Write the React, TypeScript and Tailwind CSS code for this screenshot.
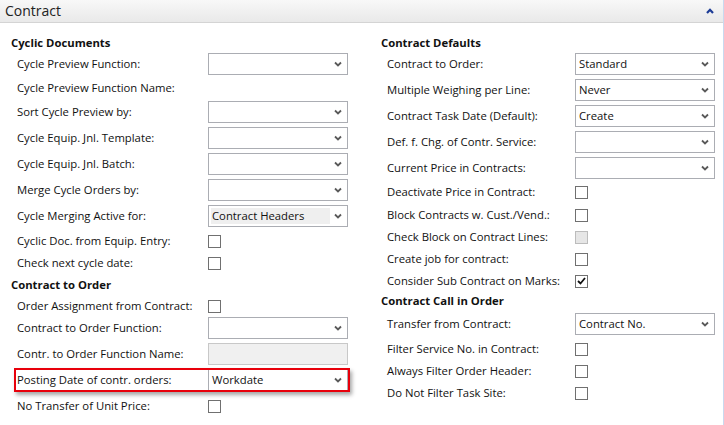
import React from "react";

type Row =
  | { kind: "heading"; text: string; h: number }
  | {
      kind: "field";
      label: string;
      h: number;
      ctl: "select" | "none" | "checkbox" | "readonly";
      value?: string;
      checked?: boolean;
      disabled?: boolean;
      inner?: boolean;
      red?: boolean;
    };

const left: Row[] = [
  { kind: "heading", text: "Cyclic Documents", h: 16 },
  { kind: "field", label: "Cycle Preview Function:", ctl: "select", h: 26 },
  { kind: "field", label: "Cycle Preview Function Name:", ctl: "none", h: 22 },
  { kind: "field", label: "Sort Cycle Preview by:", ctl: "select", h: 26 },
  { kind: "field", label: "Cycle Equip. Jnl. Template:", ctl: "select", h: 26 },
  { kind: "field", label: "Cycle Equip. Jnl. Batch:", ctl: "select", h: 26 },
  { kind: "field", label: "Merge Cycle Orders by:", ctl: "select", h: 26 },
  { kind: "field", label: "Cycle Merging Active for:", ctl: "select", value: "Contract Headers", inner: true, h: 26 },
  { kind: "field", label: "Cyclic Doc. from Equip. Entry:", ctl: "checkbox", h: 24 },
  { kind: "field", label: "Check next cycle date:", ctl: "checkbox", h: 20 },
  { kind: "heading", text: "Contract to Order", h: 24 },
  { kind: "field", label: "Order Assignment from Contract:", ctl: "checkbox", h: 18 },
  { kind: "field", label: "Contract to Order Function:", ctl: "select", h: 26 },
  { kind: "field", label: "Contr. to Order Function Name:", ctl: "readonly", h: 26 },
  { kind: "field", label: "Posting Date of contr. orders:", ctl: "select", value: "Workdate", red: true, h: 26 },
  { kind: "field", label: "No Transfer of Unit Price:", ctl: "checkbox", h: 26 },
];

const right: Row[] = [
  { kind: "heading", text: "Contract Defaults", h: 16 },
  { kind: "field", label: "Contract to Order:", ctl: "select", value: "Standard", h: 26 },
  { kind: "field", label: "Multiple Weighing per Line:", ctl: "select", value: "Never", h: 26 },
  { kind: "field", label: "Contract Task Date (Default):", ctl: "select", value: "Create", h: 26 },
  { kind: "field", label: "Def. f. Chg. of Contr. Service:", ctl: "select", h: 26 },
  { kind: "field", label: "Current Price in Contracts:", ctl: "select", h: 26 },
  { kind: "field", label: "Deactivate Price in Contract:", ctl: "checkbox", h: 23 },
  { kind: "field", label: "Block Contracts w. Cust./Vend.:", ctl: "checkbox", h: 22 },
  { kind: "field", label: "Check Block on Contract Lines:", ctl: "checkbox", disabled: true, h: 22 },
  { kind: "field", label: "Create job for contract:", ctl: "checkbox", h: 22 },
  { kind: "field", label: "Consider Sub Contract on Marks:", ctl: "checkbox", checked: true, h: 22 },
  { kind: "heading", text: "Contract Call in Order", h: 19 },
  { kind: "field", label: "Transfer from Contract:", ctl: "select", value: "Contract No.", h: 26 },
  { kind: "field", label: "Filter Service No. in Contract:", ctl: "checkbox", h: 24 },
  { kind: "field", label: "Always Filter Order Header:", ctl: "checkbox", h: 20 },
  { kind: "field", label: "Do Not Filter Task Site:", ctl: "checkbox", h: 24 },
];

function Chevron() {
  return (
    <svg width="8" height="6" viewBox="0 0 8 6" className="shrink-0 mr-[5px]">
      <polyline points="1,1.5 4,4.5 7,1.5" fill="none" stroke="#5a5a5a" strokeWidth="1.8" />
    </svg>
  );
}

function Control({ row }: { row: Extract<Row, { kind: "field" }> }) {
  if (row.ctl === "select") {
    return (
      <div className="w-[140px] h-[22px] border border-[#abadb3] bg-white flex items-center shrink-0">
        {row.inner ? (
          <div className="ml-[2px] w-[119px] h-[16px] bg-[#efefef] flex items-center pl-[1px] flex-none">
            {row.value}
          </div>
        ) : (
          <div className="pl-[3px] flex-1 leading-none">{row.value}</div>
        )}
        {row.inner && <div className="flex-1" />}
        <Chevron />
      </div>
    );
  }
  if (row.ctl === "readonly") {
    return <div className="w-[140px] h-[22px] border border-[#c8c8c8] bg-[#f0f0f0] shrink-0" />;
  }
  if (row.ctl === "checkbox") {
    return (
      <div
        className={
          row.disabled
            ? "w-[13px] h-[13px] border border-[#bcbcbc] bg-[#e6e6e6] shrink-0"
            : "w-[13px] h-[13px] border border-[#707070] bg-white shrink-0 flex items-center justify-center"
        }
      >
        {row.checked && (
          <svg width="9" height="8" viewBox="0 0 9 8">
            <polyline points="1,4 3.5,6.5 8,1" fill="none" stroke="#111" strokeWidth="1.8" />
          </svg>
        )}
      </div>
    );
  }
  return null;
}

function Column({ rows, labelW, width }: { rows: Row[]; labelW: string; width: string }) {
  return (
    <div className={`flex flex-col ${width}`}>
      {rows.map((r, i) =>
        r.kind === "heading" ? (
          <div key={i} className="flex items-center pl-[11px] font-bold" style={{ height: r.h }}>
            {r.text}
          </div>
        ) : (
          <div key={i} className="relative flex items-center pl-[17px]" style={{ height: r.h }}>
            <div className={`${labelW} shrink-0 whitespace-nowrap`}>{r.label}</div>
            <Control row={r} />
            {r.red && (
              <div className="absolute left-[14px] top-[1px] w-[336px] h-[24px] border-2 border-[#e8000b] shadow-[2px_3px_4px_rgba(0,0,0,0.35)] pointer-events-none" />
            )}
          </div>
        )
      )}
    </div>
  );
}

export default function App() {
  return (
    <div
      className="w-[724px] h-[425px] bg-white text-[11.3px] text-[#111] border-r border-[#c9d9ef] overflow-hidden"
      style={{ fontFamily: '"Open Sans", "Noto Sans", sans-serif' }}
    >
      <div className="h-[23px] border-b border-[#d4d4d4] bg-gradient-to-b from-[#f8f8f8] to-[#e9e9e9] flex items-center justify-between pl-[5px] pr-[9px]">
        <span className="text-[14px] text-[#222] leading-none">Contract</span>
        <svg width="8" height="6" viewBox="0 0 8 6">
          <polyline points="1,5 4,1.8 7,5" fill="none" stroke="#1d3c96" strokeWidth="2.2" />
        </svg>
      </div>
      <div className="flex pt-[12px]">
        <Column rows={left} labelW="w-[191px]" width="w-[370px]" />
        <Column rows={right} labelW="w-[188px]" width="w-[353px]" />
      </div>
    </div>
  );
}
